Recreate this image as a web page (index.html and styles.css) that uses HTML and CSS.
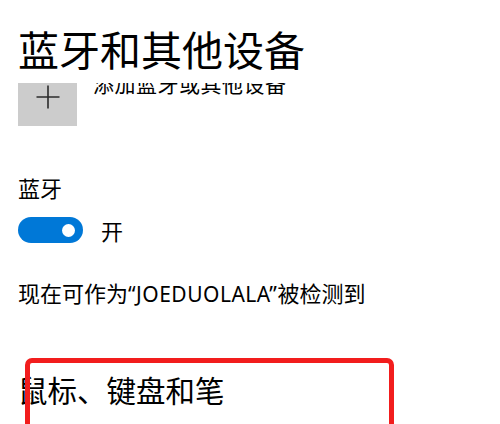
FILE: index.html
```html
<!DOCTYPE html>
<html lang="zh-CN">
<head>
<meta charset="utf-8">
<link rel="stylesheet" href="styles.css">
</head>
<body>
<main class="page">
  <h1 class="title">蓝牙和其他设备</h1>
  <div class="add-clip">
    <div class="add-row">
      <div class="add-btn">
        <svg width="24" height="24" viewBox="0 0 24 24"><path d="M12 0.5V23.5M0.5 12H23.5" stroke="#2b2b2b" stroke-width="1.6" fill="none"/></svg>
      </div>
      <div class="add-text">添加蓝牙或其他设备</div>
    </div>
  </div>
  <div class="label">蓝牙</div>
  <div class="toggle-row">
    <span class="toggle"><span class="knob"></span></span>
    <span class="toggle-text">开</span>
  </div>
  <p class="discover">现在可作为<span class="latin">“JOEDUOLALA”</span>被检测到</p>
  <h2 class="section">鼠标、键盘和笔</h2>
  <div class="highlight"></div>
</main>
</body>
</html>
```
FILE: styles.css
```css
html, body {
  margin: 0;
  padding: 0;
  background: #fff;
}
body {
  font-family: "Noto Sans CJK SC", "Microsoft YaHei", sans-serif;
  color: #000;
  overflow: hidden;
  width: 500px;
  height: 424px;
}
.page {
  position: relative;
  padding-left: 18px;
  height: 424px;
  overflow: hidden;
}
.title {
  margin: 28px 0 0 0;
  font-size: 41px;
  line-height: 40px;
  font-weight: 400;
}
.add-clip {
  margin-top: 15px;
  height: 43px;
  overflow: hidden;
}
.add-row {
  display: flex;
  align-items: flex-start;
  gap: 16px;
  margin-top: -15px;
}
.add-btn {
  width: 59px;
  height: 58px;
  background: #cccccc;
  display: flex;
  align-items: center;
  justify-content: center;
}
.add-btn svg {
  display: block;
}
.add-text {
  margin-top: 5px;
  font-size: 21px;
  line-height: 21px;
  letter-spacing: 0.5px;
}
.label {
  margin-top: 51px;
  font-size: 22px;
  line-height: 21px;
}
.toggle-row {
  margin-top: 19px;
  display: flex;
  align-items: center;
  gap: 18px;
}
.toggle {
  width: 65px;
  height: 26px;
  border-radius: 13px;
  background: #0078d7;
  display: flex;
  align-items: center;
  justify-content: flex-end;
  padding-right: 8px;
  box-sizing: border-box;
}
.knob {
  width: 13px;
  height: 13px;
  border-radius: 50%;
  background: #fff;
}
.toggle-text {
  font-size: 22px;
  line-height: 21px;
}
.discover {
  margin: 39px 0 0 0;
  font-size: 22px;
  line-height: 21px;
}
.latin {
  font-family: "Noto Sans", "Open Sans", sans-serif;
  font-size: 21px;
  letter-spacing: 0.5px;
}
.section {
  margin: 70px 0 0 0;
  font-size: 29.5px;
  line-height: 29px;
  font-weight: 400;
}
.highlight {
  position: absolute;
  left: 25px;
  top: 358px;
  width: 369px;
  height: 120px;
  box-sizing: border-box;
  border: 5px solid #f21d1d;
  border-radius: 7px;
}
```
